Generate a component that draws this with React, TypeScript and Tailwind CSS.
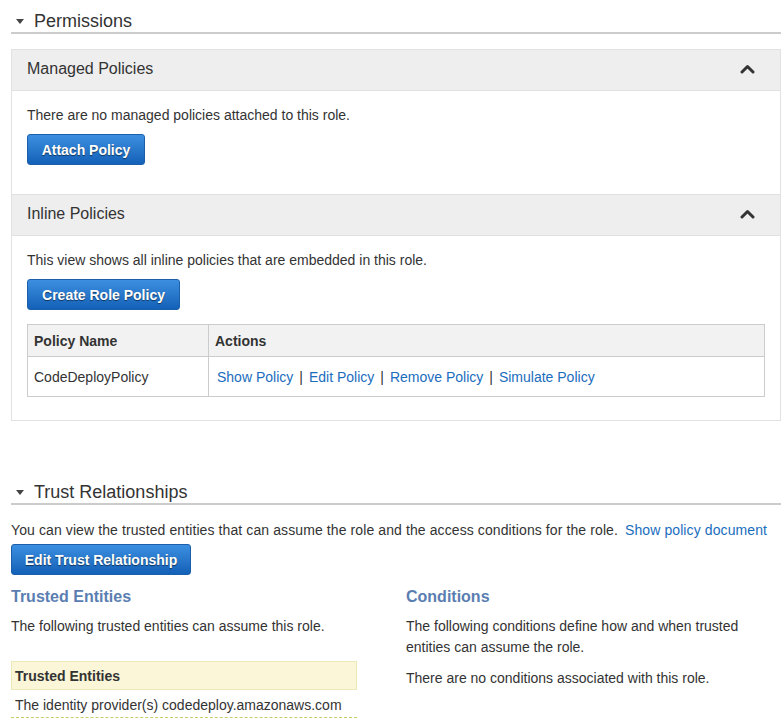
import React from "react";

const Tri = () => (
  <svg width="8" height="5" viewBox="0 0 8 5" className="shrink-0">
    <polygon points="0,0 8,0 4,5" fill="#444" />
  </svg>
);

const Chevron = () => (
  <svg width="15" height="10" viewBox="0 0 15 10">
    <polyline points="2,8 7.5,2.5 13,8" fill="none" stroke="#333" strokeWidth="3" strokeLinecap="round" strokeLinejoin="round" />
  </svg>
);

const Btn = ({ children, w }: { children: React.ReactNode; w: string }) => (
  <button
    className={`${w} h-[31px] rounded-[3px] border border-[#1b5faa] bg-gradient-to-b from-[#3c8fe0] to-[#1361b8] text-white text-[14px] font-bold flex items-center justify-center [text-shadow:0_1px_1px_rgba(0,0,0,0.55)]`}
  >
    {children}
  </button>
);

const SectionHead = ({ title }: { title: string }) => (
  <div className="h-[24px] border-b-2 border-[#cccccc] flex items-center">
    <div className="ml-[5px] mr-[10px] flex items-center">
      <Tri />
    </div>
    <span className="text-[18px] leading-[22px] text-[#333]">{title}</span>
  </div>
);

const Link = ({ children }: { children: React.ReactNode }) => (
  <span className="text-[#1a6dbd]">{children}</span>
);

const Sep = () => <span className="mx-[6px] text-[#333]">|</span>;

export default function App() {
  return (
    <div
      className="w-[783px] h-[728px] bg-white text-[#333] text-[14px] leading-[20px] overflow-hidden"
      style={{ fontFamily: '"Liberation Sans", Arial, Helvetica, sans-serif' }}
    >
      <div className="ml-[11px] w-[770px] pt-[10px]">
        <SectionHead title="Permissions" />

        <div className="mt-[15px] border border-[#e2e2e2]">
          <div className="h-[41px] bg-[#eeeeee] border-b border-[#e0e0e0] px-[15px] flex items-center justify-between">
            <span className="text-[16px] mt-[-2px]">Managed Policies</span>
            <span className="mr-[10px] mt-[-2px]"><Chevron /></span>
          </div>
          <div className="px-[15px] pt-[14px] pb-[29px]">
            <div>There are no managed policies attached to this role.</div>
            <div className="mt-[9px]">
              <Btn w="w-[118px]">Attach Policy</Btn>
            </div>
          </div>
          <div className="h-[42px] bg-[#eeeeee] border-t border-b border-[#e0e0e0] px-[15px] flex items-center justify-between">
            <span className="text-[16px] mt-[-2px]">Inline Policies</span>
            <span className="mr-[10px] mt-[-2px]"><Chevron /></span>
          </div>
          <div className="px-[15px] pt-[14px] pb-[23px]">
            <div>This view shows all inline policies that are embedded in this role.</div>
            <div className="mt-[9px]">
              <Btn w="w-[153px]">Create Role Policy</Btn>
            </div>
            <div className="mt-[14px] border border-[#cccccc]">
              <div className="flex h-[32px] bg-[#f2f2f2] border-b border-[#cccccc] font-bold">
                <div className="w-[181px] border-r border-[#cccccc] px-[6px] flex items-center">Policy Name</div>
                <div className="flex-1 px-[6px] flex items-center">Actions</div>
              </div>
              <div className="flex h-[39px]">
                <div className="w-[181px] border-r border-[#cccccc] px-[6px] flex items-center">CodeDeployPolicy</div>
                <div className="flex-1 px-[8px] flex items-center">
                  <Link>Show Policy</Link>
                  <Sep />
                  <Link>Edit Policy</Link>
                  <Sep />
                  <Link>Remove Policy</Link>
                  <Sep />
                  <Link>Simulate Policy</Link>
                </div>
              </div>
            </div>
          </div>
        </div>

        <div className="mt-[60px]">
          <SectionHead title="Trust Relationships" />
        </div>
        <div className="mt-[15px] tracking-[0.1px]">
          You can view the trusted entities that can assume the role and the access conditions for the role.
          <span className="ml-[7px]"><Link>Show policy document</Link></span>
        </div>
        <div className="mt-[4px]">
          <Btn w="w-[180px]">Edit Trust Relationship</Btn>
        </div>

        <div className="mt-[11px] flex">
          <div className="w-[385px]">
            <div className="text-[16px] leading-[22px] font-bold text-[#5a7eb1]">Trusted Entities</div>
            <div className="mt-[8px]">The following trusted entities can assume this role.</div>
            <div className="mt-[25px] w-[346px]">
              <div className="h-[29px] bg-[#faf6d7] border border-[#ede8b8] pl-[3px] flex items-center font-bold">
                Trusted Entities
              </div>
              <div className="pl-[4px] pt-[5px] pb-[2px] border-b border-dashed border-[#c6cc66]">
                The identity provider(s) codedeploy.amazonaws.com
              </div>
            </div>
          </div>
          <div className="pl-[10px] w-[385px]">
            <div className="text-[16px] leading-[22px] font-bold text-[#5a7eb1]">Conditions</div>
            <div className="mt-[8px] leading-[21px] w-[350px]">
              The following conditions define how and when trusted entities can assume the role.
            </div>
            <div className="mt-[10px] leading-[21px]">There are no conditions associated with this role.</div>
          </div>
        </div>
      </div>
    </div>
  );
}
